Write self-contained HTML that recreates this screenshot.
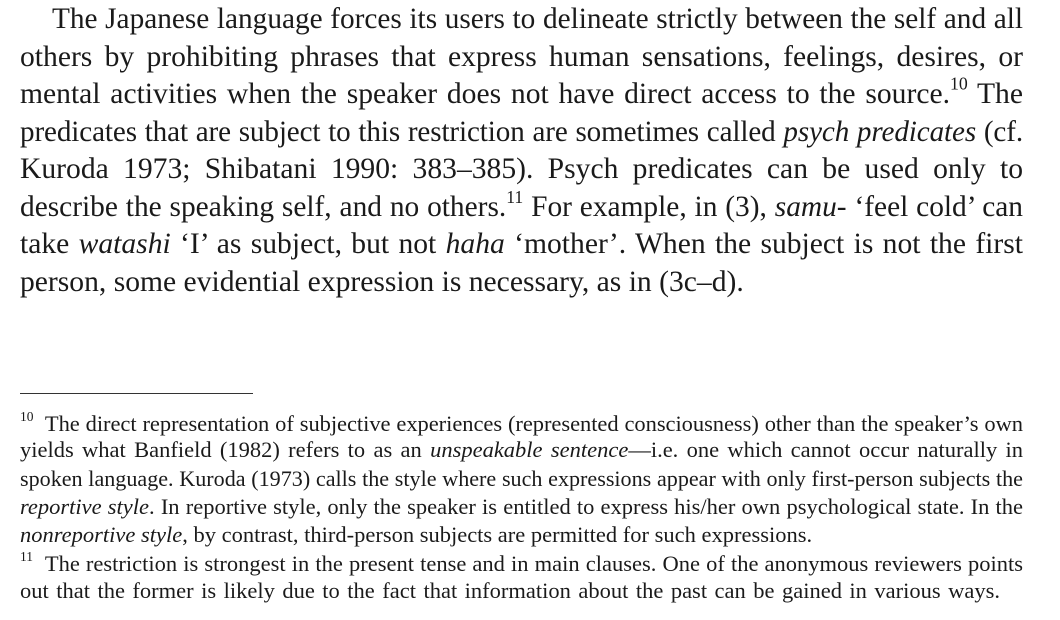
<!DOCTYPE html>
<html><head><meta charset="utf-8">
<style>
html,body{margin:0;padding:0;background:#fff;}
body{width:1060px;height:620px;position:relative;overflow:hidden;font-family:"Liberation Serif",serif;color:#1a1a1a;}
.l{position:absolute;left:20px;width:1003px;white-space:nowrap;text-align:justify;text-align-last:justify;}
.m{font-size:29.6px;line-height:30px;}
.f{font-size:22.5px;line-height:22px;}
.nj{text-align-last:left;}
sup{font-size:0.6em;line-height:0;vertical-align:0.75em;}
.rule{position:absolute;left:20px;top:393px;width:233px;height:1px;background:#333;}
</style></head><body>
<div class="l m" style="top:4px;left:52px;width:971px;font-size:29.3px">The Japanese language forces its users to delineate strictly between the self and all</div>
<div class="l m" style="top:42px">others by prohibiting phrases that express human sensations, feelings, desires, or</div>
<div class="l m" style="top:79px">mental activities when the speaker does not have direct access to the source.<sup>10</sup> The</div>
<div class="l m" style="top:117px;font-size:29.1px;letter-spacing:-0.1px">predicates that are subject to this restriction are sometimes called <i>psych predicates</i> (cf.</div>
<div class="l m" style="top:154px">Kuroda 1973; Shibatani 1990: 383–385). Psych predicates can be used only to</div>
<div class="l m" style="top:192px;font-size:29.4px">describe the speaking self, and no others.<sup>11</sup> For example, in (3), <i>samu-</i> ‘feel cold’ can</div>
<div class="l m" style="top:229px">take <i>watashi</i> ‘I’ as subject, but not <i>haha</i> ‘mother’. When the subject is not the first</div>
<div class="l m nj" style="top:267px">person, some evidential expression is necessary, as in (3c–d).</div>
<div class="rule"></div>
<div class="l f" style="top:413px;letter-spacing:-0.05px"><sup>10</sup>&nbsp; The direct representation of subjective experiences (represented consciousness) other than the speaker’s own</div>
<div class="l f" style="top:439px">yields what Banfield (1982) refers to as an <i>unspeakable sentence</i>—i.e. one which cannot occur naturally in</div>
<div class="l f" style="top:468px;font-size:22.1px">spoken language. Kuroda (1973) calls the style where such expressions appear with only first-person subjects the</div>
<div class="l f" style="top:496px"><i>reportive style</i>. In reportive style, only the speaker is entitled to express his/her own psychological state. In the</div>
<div class="l f nj" style="top:524px"><i>nonreportive style</i>, by contrast, third-person subjects are permitted for such expressions.</div>
<div class="l f" style="top:553px"><sup>11</sup>&nbsp; The restriction is strongest in the present tense and in main clauses. One of the anonymous reviewers points</div>
<div class="l f" style="top:580px;width:980px">out that the former is likely due to the fact that information about the past can be gained in various ways.</div>
</body></html>
